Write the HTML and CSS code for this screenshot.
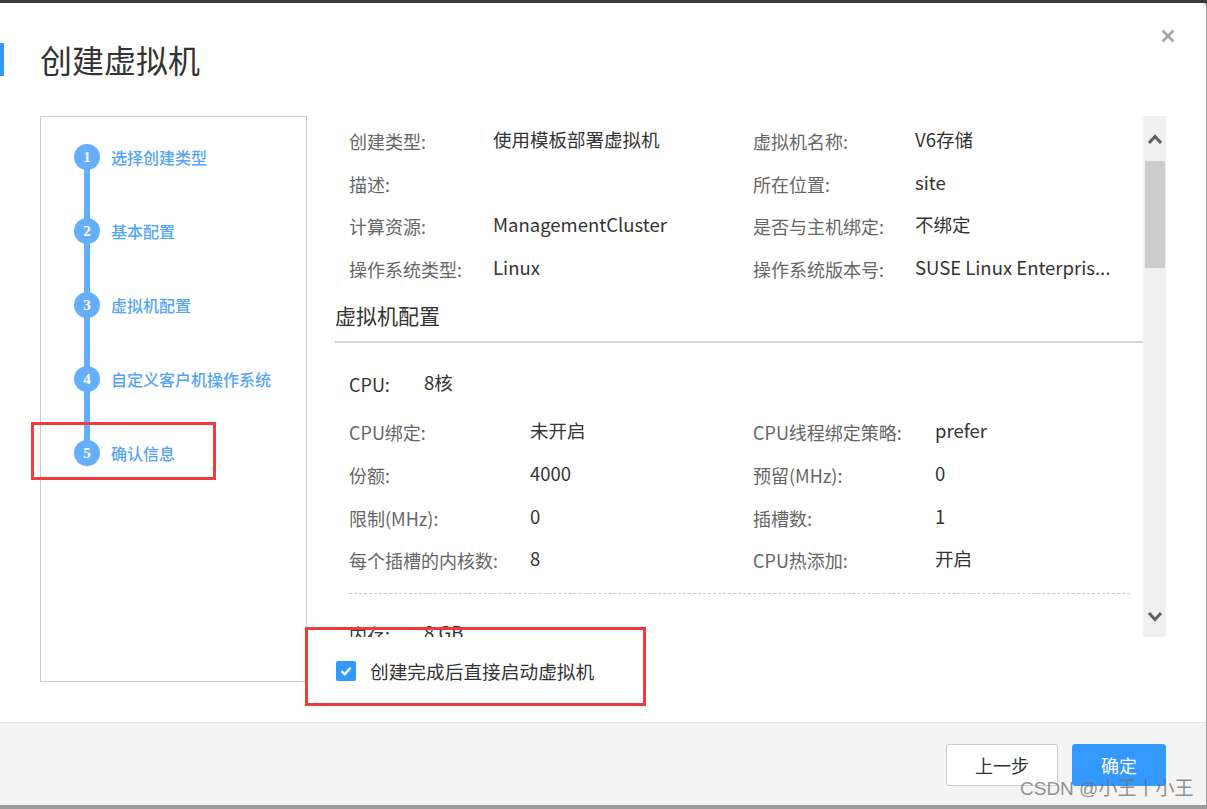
FILE: index.html
```html
<!DOCTYPE html>
<html lang="zh-CN">
<head>
<meta charset="utf-8">
<title>创建虚拟机</title>
<link rel="stylesheet" href="styles.css">
</head>
<body>
<div class="topbar"></div>
<div class="modal">
  <div class="header">
    <h1 class="title">创建虚拟机</h1>
    <span class="close" aria-label="关闭">
      <svg width="14" height="14" viewBox="0 0 14 14"><path d="M1.5 1.5 L12.5 12.5 M12.5 1.5 L1.5 12.5" stroke="#a6a6a6" stroke-width="2.6" fill="none"/></svg>
    </span>
  </div>
  <div class="body">
    <div class="steps">
      <div class="track"></div>
      <div class="step"><span class="num">1</span><span class="step-label">选择创建类型</span></div>
      <div class="step"><span class="num">2</span><span class="step-label">基本配置</span></div>
      <div class="step"><span class="num">3</span><span class="step-label">虚拟机配置</span></div>
      <div class="step"><span class="num">4</span><span class="step-label">自定义客户机操作系统</span></div>
      <div class="step"><span class="num">5</span><span class="step-label">确认信息</span></div>
    </div>
    <div class="main">
      <div class="scrollbox">
        <div class="content">
          <div class="grid basic">
            <span class="lbl">创建类型:</span><span class="val">使用模板部署虚拟机</span>
            <span class="lbl">虚拟机名称:</span><span class="val">V6存储</span>
            <span class="lbl">描述:</span><span class="val"></span>
            <span class="lbl">所在位置:</span><span class="val">site</span>
            <span class="lbl">计算资源:</span><span class="val">ManagementCluster</span>
            <span class="lbl">是否与主机绑定:</span><span class="val">不绑定</span>
            <span class="lbl">操作系统类型:</span><span class="val">Linux</span>
            <span class="lbl">操作系统版本号:</span><span class="val clip">SUSE Linux Enterpris...</span>
          </div>
          <h2 class="section">虚拟机配置</h2>
          <div class="summary"><span class="lbl dark">CPU:</span><span class="val">8核</span></div>
          <div class="grid cpu">
            <span class="lbl">CPU绑定:</span><span class="val">未开启</span>
            <span class="lbl">CPU线程绑定策略:</span><span class="val">prefer</span>
            <span class="lbl">份额:</span><span class="val">4000</span>
            <span class="lbl">预留(MHz):</span><span class="val">0</span>
            <span class="lbl">限制(MHz):</span><span class="val">0</span>
            <span class="lbl">插槽数:</span><span class="val">1</span>
            <span class="lbl">每个插槽的内核数:</span><span class="val">8</span>
            <span class="lbl">CPU热添加:</span><span class="val">开启</span>
          </div>
          <div class="dashed"></div>
          <div class="summary"><span class="lbl dark">内存:</span><span class="val">8 GB</span></div>
        </div>
        <div class="scrollbar">
          <span class="arrow">
            <svg width="16" height="12" viewBox="0 0 16 12"><path d="M2 10 L8 3.5 L14 10" stroke="#5f5f5f" stroke-width="3" fill="none"/></svg>
          </span>
          <div class="thumb"></div>
          <div class="rail"></div>
          <span class="arrow">
            <svg width="16" height="12" viewBox="0 0 16 12"><path d="M2 2 L8 8.5 L14 2" stroke="#5f5f5f" stroke-width="3" fill="none"/></svg>
          </span>
        </div>
      </div>
      <label class="check">
        <span class="box">
          <svg width="14" height="14" viewBox="0 0 14 14"><path d="M2.5 7.2 L5.8 10.2 L11.5 3.8" stroke="#fff" stroke-width="2.4" fill="none"/></svg>
        </span>
        <span class="check-text">创建完成后直接启动虚拟机</span>
      </label>
    </div>
    <div class="mark mark-step"></div>
    <div class="mark mark-check"></div>
  </div>
  <div class="footer">
    <button class="btn">上一步</button>
    <button class="btn primary">确定</button>
  </div>
  <div class="watermark">CSDN @小王丨小王</div>
</div>
</body>
</html>
```

FILE: styles.css
```css
html, body {
  margin: 0;
  padding: 0;
}
body {
  width: 1207px;
  height: 809px;
  overflow: hidden;
  background: #9c9c9c;
  font-family: "Noto Sans CJK SC", "Noto Sans", sans-serif;
  color: #333;
}
.topbar {
  height: 3px;
  background: #3a3a3a;
}
.modal {
  position: relative;
  width: 1206px;
  background: #fff;
  border-radius: 0 4px 0 0;
}
.header {
  height: 113px;
  box-sizing: border-box;
  padding: 40px 31px 0 0;
  display: flex;
  justify-content: space-between;
  align-items: flex-start;
}
.title {
  margin: 0;
  border-left: 4px solid #3399ff;
  padding-left: 36px;
  font-size: 32px;
  font-weight: normal;
  line-height: 33px;
  height: 33px;
  color: #333;
}
.close {
  margin-top: -14px;
  width: 14px;
  height: 14px;
  display: block;
}
.close svg { display: block; }

.body {
  height: 606px;
  box-sizing: border-box;
  padding: 0 40px;
  display: flex;
  gap: 28px;
}
.steps {
  position: relative;
  width: 267px;
  height: 566px;
  box-sizing: border-box;
  border: 1px solid #cccccc;
  padding-top: 3px;
}
.track {
  position: absolute;
  left: 43px;
  top: 40px;
  width: 6px;
  height: 296px;
  background: #64aefb;
}
.step {
  position: relative;
  height: 74px;
  display: flex;
  align-items: center;
  padding-left: 33px;
}
.num {
  width: 26px;
  height: 26px;
  border-radius: 50%;
  background: #64aefb;
  color: #fff;
  font-family: "Liberation Serif", serif;
  font-weight: bold;
  font-size: 15px;
  display: flex;
  align-items: center;
  justify-content: center;
}
.step-label {
  margin-left: 11px;
  font-size: 16px;
  color: #55a5f5;
  font-weight: 500;
}

.main {
  width: 831px;
  display: flex;
  flex-direction: column;
}
.scrollbox {
  height: 521px;
  display: flex;
}
.content {
  flex: 1;
  overflow: hidden;
  padding-top: 3px;
}
.grid {
  display: grid;
  align-items: center;
}
.grid.basic {
  grid-template-columns: 144px 260px 162px 1fr;
  grid-auto-rows: 42.5px;
  padding-left: 14px;
}
.grid.cpu {
  grid-template-columns: 181px 223px 182px 1fr;
  grid-auto-rows: 42.67px;
  padding-left: 14px;
}
.lbl {
  font-size: 18px;
  color: #666;
  line-height: 24px;
  position: relative;
  top: 1px;
  white-space: nowrap;
}
.lbl.dark { color: #333; }
.val {
  font-size: 18.5px;
  color: #333;
  line-height: 24px;
  position: relative;
  top: -1px;
  white-space: nowrap;
}
.val.clip {
  overflow: hidden;
}
.section {
  margin: 6px 0 0;
  height: 40px;
  line-height: 40px;
  padding-bottom: 6px;
  border-bottom: 2px solid #d6d6d6;
  font-size: 21px;
  font-weight: normal;
  color: #333;
}
.summary {
  height: 42px;
  display: flex;
  align-items: center;
  padding-left: 14px;
  margin-top: 19px;
  margin-bottom: 6px;
}
.summary .lbl {
  width: 75px;
}
.dashed {
  margin: 12px 13px 0 14px;
  border-top: 1px dashed #c8c8c8;
}
.dashed + .summary {
  margin-top: 18px;
}
.scrollbar {
  width: 23px;
  background: #f0f0f0;
  display: flex;
  flex-direction: column;
  align-items: center;
}
.arrow {
  height: 45px;
  display: flex;
  align-items: center;
  justify-content: center;
}
.arrow svg { display: block; }
.scrollbar .arrow:first-child {
  align-items: flex-end;
  padding-bottom: 16px;
  box-sizing: border-box;
}
.scrollbar .arrow:last-child {
  align-items: flex-start;
  padding-top: 19px;
  box-sizing: border-box;
}
.thumb {
  width: 20px;
  height: 107px;
  background: #cdcdcd;
}
.rail { flex: 1; }

.check {
  display: flex;
  align-items: center;
  padding: 20px 0 0 1px;
}
.box {
  width: 20px;
  height: 20px;
  border-radius: 2px;
  background: #3399ff;
  display: flex;
  align-items: center;
  justify-content: center;
}
.box svg { display: block; }
.check-text {
  margin-left: 14px;
  font-size: 18.7px;
  color: #333;
}

.mark {
  position: absolute;
  border: 3px solid #ef3b3b;
  box-sizing: border-box;
  pointer-events: none;
}
.mark-step {
  left: 31px;
  top: 419px;
  width: 185px;
  height: 58px;
}
.mark-check {
  left: 305px;
  top: 624px;
  width: 341px;
  height: 79px;
}

.footer {
  height: 83px;
  box-sizing: border-box;
  background: #f4f4f4;
  border-top: 1px solid #e6e6e6;
  padding: 21px 40px 0 0;
  display: flex;
  justify-content: flex-end;
  align-items: flex-start;
  gap: 14px;
}
.btn {
  height: 42px;
  width: 112px;
  border: 1px solid #cccccc;
  background: #fff;
  border-radius: 3px;
  font-family: "Noto Sans CJK SC", sans-serif;
  font-size: 18px;
  color: #333;
  padding: 0;
}
.btn.primary {
  width: 94px;
  background: #3399ff;
  border-color: #3399ff;
  color: #fff;
}
.watermark {
  position: absolute;
  left: 1020px;
  top: 774px;
  font-size: 19px;
  line-height: 24px;
  color: rgba(110, 110, 110, 0.75);
  font-family: "Liberation Sans", "Noto Sans CJK SC", sans-serif;
  white-space: nowrap;
  pointer-events: none;
}
```
